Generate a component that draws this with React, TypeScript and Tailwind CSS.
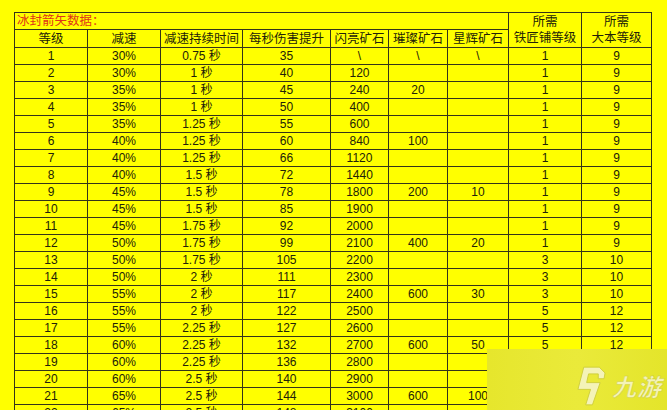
import React from "react";

const rows: string[][] = [
  ["1", "30%", "0.75 秒", "35", "\\", "\\", "\\", "1", "9"],
  ["2", "30%", "1 秒", "40", "120", "", "", "1", "9"],
  ["3", "35%", "1 秒", "45", "240", "20", "", "1", "9"],
  ["4", "35%", "1 秒", "50", "400", "", "", "1", "9"],
  ["5", "35%", "1.25 秒", "55", "600", "", "", "1", "9"],
  ["6", "40%", "1.25 秒", "60", "840", "100", "", "1", "9"],
  ["7", "40%", "1.25 秒", "66", "1120", "", "", "1", "9"],
  ["8", "40%", "1.5 秒", "72", "1440", "", "", "1", "9"],
  ["9", "45%", "1.5 秒", "78", "1800", "200", "10", "1", "9"],
  ["10", "45%", "1.5 秒", "85", "1900", "", "", "1", "9"],
  ["11", "45%", "1.75 秒", "92", "2000", "", "", "1", "9"],
  ["12", "50%", "1.75 秒", "99", "2100", "400", "20", "1", "9"],
  ["13", "50%", "1.75 秒", "105", "2200", "", "", "3", "10"],
  ["14", "50%", "2 秒", "111", "2300", "", "", "3", "10"],
  ["15", "55%", "2 秒", "117", "2400", "600", "30", "3", "10"],
  ["16", "55%", "2 秒", "122", "2500", "", "", "5", "12"],
  ["17", "55%", "2.25 秒", "127", "2600", "", "", "5", "12"],
  ["18", "60%", "2.25 秒", "132", "2700", "600", "50", "5", "12"],
  // the last columns of these rows sit under the watermark
  ["19", "60%", "2.25 秒", "136", "2800", "", "", "", ""],
  ["20", "60%", "2.5 秒", "140", "2900", "", "", "", ""],
  ["21", "65%", "2.5 秒", "144", "3000", "600", "100", "", ""],
  ["22", "65%", "2.5 秒", "148", "3100", "", "", "", ""],
];

const widths = [73, 73, 82, 88, 58, 59, 61, 73, 70];
const heads = ["等级", "减速", "减速持续时间", "每秒伤害提升", "闪亮矿石", "璀璨矿石", "星辉矿石"];

const cell = "border border-[#34341a] p-0 text-center align-middle whitespace-nowrap";

function Logo() {
  return (
    <div className="absolute right-0 bottom-0 flex h-[61px] w-[180px] items-center justify-end gap-[6px] pr-[5px] pt-[12px] bg-gradient-to-r from-[#e6e62c] via-[#eaea3a] to-[#e4e52a]">
      <svg width="30" height="40" viewBox="0 0 31 41">
        <path
          d="M8 1 L24 1 L30 7 L29 13 L23 13 L23 8 L13 8 L11 17 L25 17 L17 40 L10 40 L15 24 L2 24 Z"
          fill="#f4f3b8"
          stroke="#cfcf3c"
          strokeWidth="1"
        />
      </svg>
      <span
        className="text-[24px] font-bold italic leading-none text-[#f4f3b8] tracking-[1px]"
        style={{ fontFamily: '"Noto Sans CJK SC", sans-serif', WebkitTextStroke: "0.5px #cfcf3c" }}
      >
        九游
      </span>
    </div>
  );
}

export default function App() {
  return (
    <div
      className="relative h-[410px] w-[667px] overflow-hidden bg-[#ffff00] pt-[12px] pl-[14px] text-[#222208]"
      style={{ fontFamily: '"Liberation Sans", "Noto Sans CJK SC", sans-serif' }}
    >
      <table className="table-fixed border-collapse">
        <colgroup>
          {widths.map((w, i) => (
            <col key={i} style={{ width: w }} />
          ))}
        </colgroup>
        <tbody>
          <tr className="h-[17px]">
            <td colSpan={7} className={`${cell} text-left pl-[2px] text-[12.5px] leading-[15px] text-[#e03418]`}>
              冰封箭矢数据：
            </td>
            <td rowSpan={2} className={`${cell} text-[12.5px] leading-[16px]`}>
              所需
              <br />
              铁匠铺等级
            </td>
            <td rowSpan={2} className={`${cell} text-[12.5px] leading-[16px]`}>
              所需
              <br />
              大本等级
            </td>
          </tr>
          <tr className="h-[18px]">
            {heads.map((h) => (
              <td key={h} className={`${cell} text-[12.5px] leading-[16px]`}>
                {h}
              </td>
            ))}
          </tr>
          {rows.map((r) => (
            <tr key={r[0]} className="h-[17px]">
              {r.map((v, i) => (
                <td key={i} className={`${cell} text-[12px] leading-[15px]`}>
                  {v}
                </td>
              ))}
            </tr>
          ))}
        </tbody>
      </table>
      <Logo />
    </div>
  );
}
